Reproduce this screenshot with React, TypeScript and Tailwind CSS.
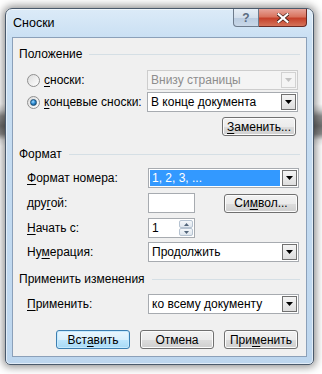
import clsx from 'clsx'

const font = "font-['Liberation_Sans',Arial,sans-serif]"

function Ul({ children }: { children: string }) {
    return <span className="underline decoration-1 underline-offset-[2px]">{children}</span>
}

function Arrow({ disabled }: { disabled?: boolean }) {
    return (
        <svg width="7" height="4" viewBox="0 0 7 4">
            <path d="M0 0H7L3.5 4Z" fill={disabled ? '#c2c2c2' : '#000'} />
        </svg>
    )
}

function Combo(props: { value: string; disabled?: boolean; selected?: boolean }) {
    const { value, disabled, selected } = props
    return (
        <div
            className={clsx(
                'flex h-[20px] w-[151px] border p-[1px]',
                disabled ? 'border-[#cdcdcd] bg-[#f4f4f4]' : 'border-[#a7abb0] bg-white'
            )}
        >
            <div className="flex min-w-0 flex-1 items-center pr-[2px]">
                <span
                    className={clsx(
                        'flex h-full w-full items-center px-[2px] leading-none',
                        selected && 'bg-[#3399ff] text-white',
                        disabled && 'text-[#8d8d8d]'
                    )}
                >
                    {value}
                </span>
            </div>
            <div
                className={clsx(
                    'flex w-[15px] items-center justify-center border',
                    disabled
                        ? 'border-[#d2d2d2] bg-[#f4f4f4]'
                        : 'border-[#707070] bg-[linear-gradient(to_bottom,#f4f4f4,#dedede)]'
                )}
            >
                <Arrow disabled={disabled} />
            </div>
        </div>
    )
}

function Btn(props: { children: React.ReactNode; def?: boolean }) {
    return (
        <div
            className={clsx(
                'flex h-[19px] w-[74px] items-center justify-center rounded-[3px] border leading-none',
                props.def
                    ? 'border-[#3c7fb1] bg-[linear-gradient(to_bottom,#eaf6fd_0,#d9f0fc_50%,#bee6fd_51%,#a7d9f5_100%)] shadow-[inset_0_0_0_1px_#c7eafe]'
                    : 'border-[#707070] bg-[linear-gradient(to_bottom,#f2f2f2_0,#ebebeb_50%,#dddddd_51%,#cfcfcf_100%)] shadow-[inset_0_0_0_1px_#fcfcfc]'
            )}
        >
            {props.children}
        </div>
    )
}

function Radio({ checked }: { checked?: boolean }) {
    return (
        <div className="flex h-[13px] w-[13px] items-center justify-center rounded-full border border-[#8f8f8f] bg-[linear-gradient(135deg,#dcdcdc,#ffffff)]">
            {checked && (
                <div className="h-[7px] w-[7px] rounded-full border border-[#1c4f75] bg-[radial-gradient(circle_at_40%_35%,#a6dcff_0,#2f8ed6_45%,#0d3c63_100%)]" />
            )}
        </div>
    )
}

function Header({ children }: { children: string }) {
    return (
        <div className="flex h-[16px] items-center gap-[7px] px-[6px]">
            <span className="leading-none">{children}</span>
            <div className="h-px flex-1 bg-[#d5dfe5]" />
        </div>
    )
}

function Row(props: { label: React.ReactNode; children: React.ReactNode; className?: string }) {
    return (
        <div className={clsx('flex h-[20px] items-center pl-[14px]', props.className)}>
            <div className="w-[121px] leading-none">{props.label}</div>
            {props.children}
        </div>
    )
}

export default function App() {
    return (
        <div
            className={clsx(
                'h-[374px] w-[322px] overflow-hidden pl-[5px] pt-[8px] text-[12px] text-black',
                font,
                'bg-[linear-gradient(to_bottom,#ffffff_0,#ffffff_104px,#d8d8d8_110px,#8e8e8e_116px,#6f6f6f_126px,#8a8a8a_134px,#e8e8e8_140px,#ffffff_146px,#ffffff_100%)]'
            )}
        >
            <div className="flex h-[357px] w-[309px] flex-col rounded-t-[7px] rounded-b-[5px] border border-[#4a5a6c] bg-[linear-gradient(to_bottom,#dcebf8_0,#c9dff3_30px,#bdd6ee_100%)] px-[6px] pb-[7px] shadow-[0_0_8px_2px_rgba(0,0,0,0.45),inset_0_0_0_1px_rgba(255,255,255,0.55)]">
                <div className="flex h-[28px] shrink-0 items-start">
                    <span className="mt-[8px] pl-[1px] text-[12.5px] leading-none text-black">Сноски</span>
                    <div className="ml-auto flex">
                        <div className="flex h-[18px] w-[26px] items-center justify-center rounded-bl-[4px] border border-t-0 border-[#6d7b8c] bg-[linear-gradient(to_bottom,#e6eef6_0,#d3dfec_50%,#b9cbe0_51%,#c9d8e8_100%)] text-[12px] font-bold leading-none text-[#5b6b80]">
                            ?
                        </div>
                        <div className="flex h-[18px] w-[48px] items-center justify-center rounded-br-[4px] border border-l-0 border-t-0 border-[#6b2a24] bg-[linear-gradient(to_bottom,#e7a49a_0,#d9745f_45%,#c5412b_55%,#d5735a_100%)]">
                            <svg width="12" height="10" viewBox="0 0 12 10">
                                <path d="M1 1L11 9M11 1L1 9" stroke="#3d1a14" strokeWidth="3.6" strokeLinecap="square" />
                                <path d="M1.5 1.2L10.5 8.8M10.5 1.2L1.5 8.8" stroke="#fff" strokeWidth="2.2" strokeLinecap="square" />
                            </svg>
                        </div>
                    </div>
                </div>

                <div className="flex flex-1 flex-col border border-[#8ba0b9] bg-[#f0f0f0] pt-[8px]">
                    <Header>Положение</Header>

                    <div className="mt-[8px] flex h-[20px] items-center pl-[14px]">
                        <Radio />
                        <span className="ml-[4px] w-[103px] leading-none">
                            <Ul>с</Ul>носки:
                        </span>
                        <Combo value="Внизу страницы" disabled />
                    </div>
                    <div className="mt-[2px] flex h-[20px] items-center pl-[14px]">
                        <Radio checked />
                        <span className="ml-[4px] w-[103px] leading-none">
                            <Ul>к</Ul>онцевые сноски:
                        </span>
                        <Combo value="В конце документа" />
                    </div>
                    <div className="mt-[5px] flex justify-end pr-[8px]">
                        <div className="w-[76px]">
                            <Btn>
                                <span>
                                    <Ul>З</Ul>аменить...
                                </span>
                            </Btn>
                        </div>
                    </div>

                    <div className="mt-[10px]">
                        <Header>Формат</Header>
                    </div>
                    <Row
                        className="mt-[6px]"
                        label={
                            <>
                                <Ul>Ф</Ul>ормат номера:
                            </>
                        }
                    >
                        <Combo value="1, 2, 3, ..." selected />
                    </Row>
                    <Row
                        className="mt-[5px]"
                        label={
                            <>
                                дру<Ul>г</Ul>ой:
                            </>
                        }
                    >
                        <div className="h-[20px] w-[47px] border border-[#a7abb0] bg-white" />
                        <div className="ml-auto pr-[8px]">
                            <Btn>
                                <span>
                                    Си<Ul>м</Ul>вол...
                                </span>
                            </Btn>
                        </div>
                    </Row>
                    <Row
                        className="mt-[5px]"
                        label={
                            <>
                                <Ul>Н</Ul>ачать с:
                            </>
                        }
                    >
                        <div className="flex h-[20px] w-[47px] border border-[#a7abb0] bg-white">
                            <div className="flex flex-1 items-center pl-[3px] leading-none">1</div>
                            <div className="flex w-[16px] flex-col p-[1px]">
                                <div className="flex flex-1 items-center justify-center rounded-[2px] border border-[#b6c3d1] bg-[linear-gradient(to_bottom,#f4f7fa,#dfe6ee)]">
                                    <svg width="5" height="3" viewBox="0 0 5 3">
                                        <path d="M0 3H5L2.5 0Z" fill="#52657a" />
                                    </svg>
                                </div>
                                <div className="flex flex-1 items-center justify-center rounded-[2px] border border-[#b6c3d1] bg-[linear-gradient(to_bottom,#f4f7fa,#dfe6ee)]">
                                    <svg width="5" height="3" viewBox="0 0 5 3">
                                        <path d="M0 0H5L2.5 3Z" fill="#52657a" />
                                    </svg>
                                </div>
                            </div>
                        </div>
                    </Row>
                    <Row
                        className="mt-[4px]"
                        label={
                            <>
                                Ну<Ul>м</Ul>ерация:
                            </>
                        }
                    >
                        <Combo value="Продолжить" />
                    </Row>

                    <div className="mt-[9px]">
                        <Header>Применить изменения</Header>
                    </div>
                    <Row
                        className="mt-[7px]"
                        label={
                            <>
                                <Ul>П</Ul>рименить:
                            </>
                        }
                    >
                        <Combo value="ко всему документу" />
                    </Row>

                    <div className="mt-[16px] flex justify-end gap-[10px] pr-[8px]">
                        <Btn def>
                            <span>
                                Вст<Ul>а</Ul>вить
                            </span>
                        </Btn>
                        <Btn>Отмена</Btn>
                        <Btn>
                            <span>
                                При<Ul>м</Ul>енить
                            </span>
                        </Btn>
                    </div>
                </div>
            </div>
        </div>
    )
}
